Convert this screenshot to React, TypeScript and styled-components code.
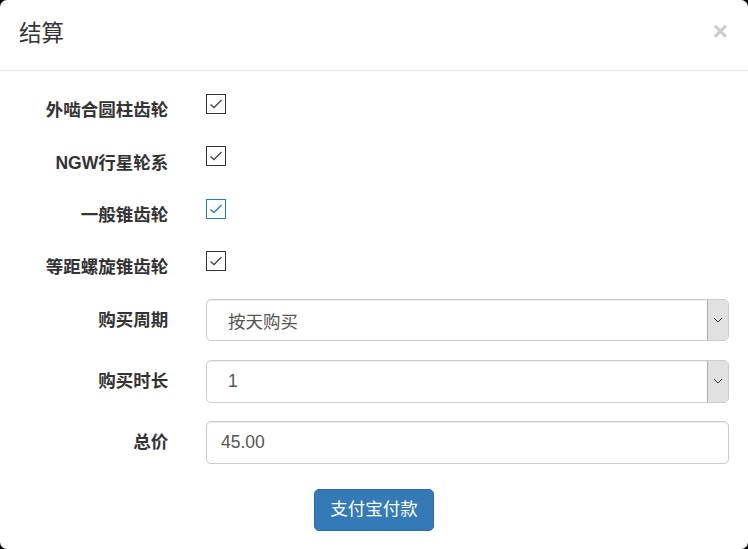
import React from "react";
import styled, { createGlobalStyle } from "styled-components";

const Global = createGlobalStyle`
  html, body { margin: 0; padding: 0; background: #000; height: 100%; overflow: hidden; }
  * { box-sizing: border-box; }
  body { font-family: "Liberation Sans", "Noto Sans CJK SC", sans-serif; color: #333; }
`;

const Modal = styled.div`
  height: 100vh;
  background: #fff;
  border-radius: 7px;
  overflow: hidden;
`;

const Header = styled.div`
  display: flex;
  align-items: flex-start;
  justify-content: space-between;
  padding: 18px 20px 18px 19px;
  border-bottom: 1px solid #e5e5e5;
  height: 71px;
`;

const Title = styled.h4`
  margin: 0;
  font-size: 22.5px;
  line-height: 32px;
  font-weight: 400;
  color: #333;
`;

const Close = styled.button`
  border: 0;
  background: transparent;
  padding: 0;
  font-family: "Liberation Sans", sans-serif;
  font-size: 26px;
  font-weight: 700;
  line-height: 1;
  color: #000;
  opacity: 0.2;
  cursor: pointer;
`;

const Body = styled.div`
  padding: 18.75px 0;
`;

const Group = styled.div<{ $tall?: boolean }>`
  display: grid;
  grid-template-columns: 187px 1fr;
  height: ${p => (p.$tall ? "42.5px" : "33.5px")};
  margin-bottom: 18.75px;
`;

const Label = styled.label<{ $tall?: boolean }>`
  text-align: right;
  padding-right: 18.75px;
  padding-top: ${p => (p.$tall ? "8.75px" : "8.5px")};
  font-size: 17.5px;
  line-height: 25px;
  font-weight: 700;
  color: #333;
  white-space: nowrap;
`;

const Control = styled.div`
  padding: 0 18.75px 0 19px;
  min-width: 0;
`;

const CheckBox = styled.span<{ $active?: boolean }>`
  display: flex;
  align-items: center;
  justify-content: center;
  width: 20px;
  height: 20px;
  margin-top: 4.25px;
  border: 1.5px solid ${p => (p.$active ? "#1a7fd4" : "#333")};
  background: #fff;
`;

const Field = styled.div`
  position: relative;
  height: 42.5px;
  border: 1px solid #ccc;
  border-radius: 5px;
  box-shadow: inset 0 1px 1px rgba(0,0,0,0.075);
  display: flex;
  align-items: center;
  font-size: 17.5px;
  color: #555;
  overflow: hidden;
`;

const FieldText = styled.span<{ $select?: boolean }>`
  flex: 1;
  padding-left: ${p => (p.$select ? "21px" : "14px")};
`;

const Arrow = styled.span`
  align-self: stretch;
  width: 21px;
  background: #e1e1e1;
  border-left: 1px solid #adadad;
  display: flex;
  align-items: center;
  justify-content: center;
`;

const Footer = styled.div`
  display: flex;
  justify-content: center;
  padding-top: 6px;
`;

const PayButton = styled.button`
  height: 42px;
  padding: 0 15px;
  background: #337ab7;
  border: 1px solid #2e6da4;
  border-radius: 5px;
  color: #fff;
  font-family: "Liberation Sans", "Noto Sans CJK SC", sans-serif;
  font-size: 17.5px;
  line-height: 1;
  cursor: pointer;
`;

const Check = ({ color }: { color: string }) => (
  <svg width="14" height="12" viewBox="0 0 14 12">
    <path d="M1.5 6.5 L5 9.5 L12.5 2" fill="none" stroke={color} strokeWidth="1.3" />
  </svg>
);

const Chevron = () => (
  <svg width="10" height="6" viewBox="0 0 10 6">
    <path d="M1 1 L5 5 L9 1" fill="none" stroke="#333" strokeWidth="1" />
  </svg>
);

const checks = [
  { label: "外啮合圆柱齿轮", active: false },
  { label: "NGW行星轮系", active: false },
  { label: "一般锥齿轮", active: true },
  { label: "等距螺旋锥齿轮", active: false },
];

export default function App() {
  return (
    <>
      <Global />
      <Modal>
        <Header>
          <Title>结算</Title>
          <Close aria-label="close">×</Close>
        </Header>
        <Body>
          {checks.map(c => (
            <Group key={c.label}>
              <Label>{c.label}</Label>
              <Control>
                <CheckBox $active={c.active}>
                  <Check color={c.active ? "#1a7fd4" : "#444"} />
                </CheckBox>
              </Control>
            </Group>
          ))}
          <Group $tall>
            <Label $tall>购买周期</Label>
            <Control>
              <Field>
                <FieldText $select>按天购买</FieldText>
                <Arrow><Chevron /></Arrow>
              </Field>
            </Control>
          </Group>
          <Group $tall>
            <Label $tall>购买时长</Label>
            <Control>
              <Field>
                <FieldText $select>1</FieldText>
                <Arrow><Chevron /></Arrow>
              </Field>
            </Control>
          </Group>
          <Group $tall>
            <Label $tall>总价</Label>
            <Control>
              <Field>
                <FieldText>45.00</FieldText>
              </Field>
            </Control>
          </Group>
          <Footer>
            <PayButton>支付宝付款</PayButton>
          </Footer>
        </Body>
      </Modal>
    </>
  );
}
